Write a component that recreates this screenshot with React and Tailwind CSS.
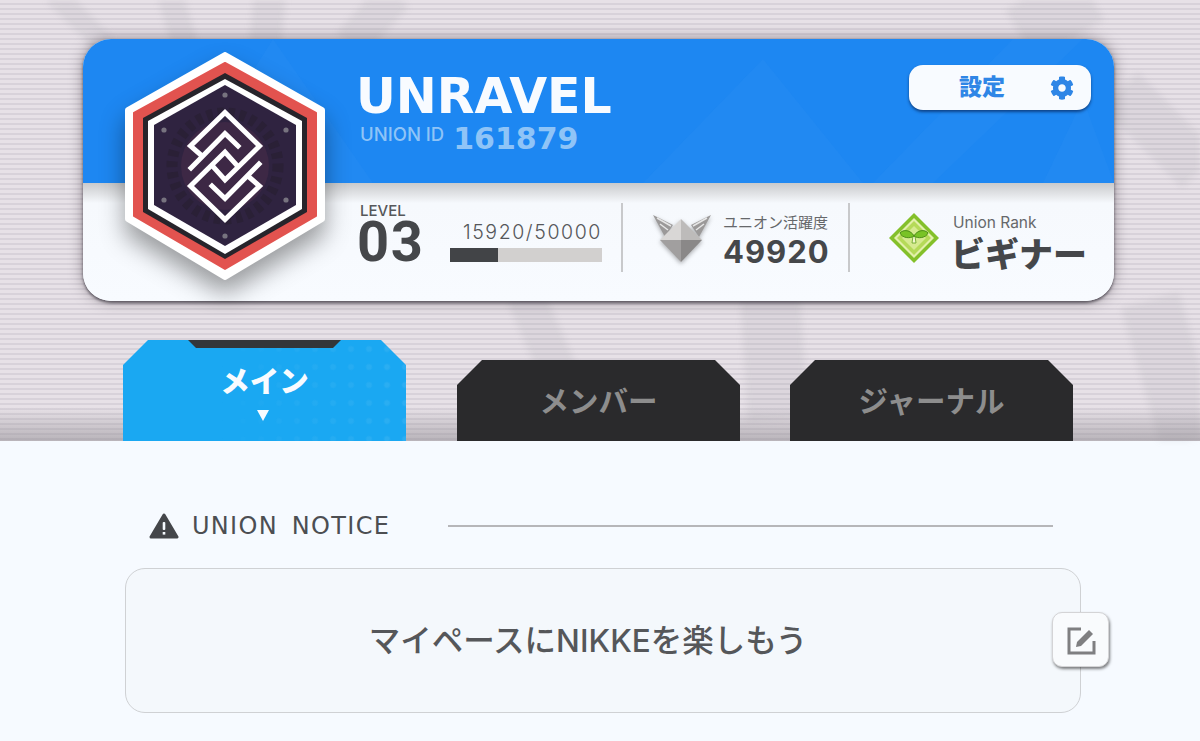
import { FaCog } from "react-icons/fa";

const jp = "font-['Inter','Noto_Sans_CJK_JP',sans-serif]";

function Badge() {
  const arm = (
    <>
      <polyline points="76,103 65.5,94 100,60.5 134.5,94 100,128 87.5,114" />
      <polyline points="66,116 100,81.5 113,94" />
    </>
  );
  return (
    <svg viewBox="0 0 200 228" className="absolute left-[42px] top-[13px] h-[228px] w-[200px] drop-shadow-[0_14px_12px_rgba(0,0,0,0.38)]">
      <polygon points="100,3 197,58 197,167 100,225 3,167 3,58" fill="#fff" stroke="#fff" strokeWidth="6" strokeLinejoin="round" />
      <polygon points="100,11 191,61 191,164 100,217 9,164 9,61" fill="#e2534f" stroke="#e2534f" strokeWidth="2" strokeLinejoin="round" />
      <polygon points="100,21 182,66 182,160 100,207 18,160 18,66" fill="#27242b" />
      <polygon points="100,27 177,69 177,157 100,202 23,157 23,69" fill="#fff" />
      <polygon points="100,33 171,73 171,153 100,194 29,153 29,73" fill="#2f2340" />
      <circle cx="100" cy="114" r="53" fill="none" stroke="#2a2036" strokeWidth="11" strokeDasharray="6 5" />
      <circle cx="100" cy="114" r="44" fill="#3d2845" />
      <g fill="#77737f">
        <circle cx="100" cy="43" r="2.6" />
        <circle cx="161" cy="78" r="2.6" />
        <circle cx="161" cy="148" r="2.6" />
        <circle cx="100" cy="184" r="2.6" />
        <circle cx="39" cy="148" r="2.6" />
        <circle cx="39" cy="78" r="2.6" />
      </g>
      <g fill="none" stroke="#fff" strokeWidth="5" strokeLinecap="square" strokeLinejoin="miter">
        {arm}
        <g transform="rotate(180 100 114)">{arm}</g>
      </g>
    </svg>
  );
}

function SilverMark() {
  return (
    <svg viewBox="0 0 58 50" className="h-[50px] w-[58px] drop-shadow-[0_2px_2px_rgba(0,0,0,0.3)]">
      <path d="M0 2 L20 12 L12 24 Z" fill="#9b9999" />
      <path d="M58 2 L38 12 L46 24 Z" fill="#9b9999" />
      <path d="M4 5 L18 13 M7 11 L15 17 M54 5 L40 13 M51 11 L43 17" stroke="#e6e6e6" strokeWidth="1.5" />
      <path d="M28 6 L7 27 L28 27 Z" fill="#d9d7d6" />
      <path d="M28 6 L49 27 L28 27 Z" fill="#bdbbba" />
      <path d="M7 27 L28 49 L28 27 Z" fill="#a19f9f" />
      <path d="M49 27 L28 49 L28 27 Z" fill="#8a8888" />
    </svg>
  );
}

function SproutMark() {
  return (
    <svg viewBox="0 0 52 52" className="h-[52px] w-[52px]">
      <polygon points="26,1 51,26 26,51 1,26" fill="#84c02a" />
      <polygon points="26,6 46,26 26,46 6,26" fill="#e3f0ab" />
      <polygon points="26,9 43,26 26,43 9,26" fill="#b5da58" />
      <polygon points="26,14 38,26 26,38 14,26" fill="#d6ea90" />
      <path d="M24 31 H28 L27 24 H25 Z" fill="#f3f8d0" stroke="#5f9f1c" strokeWidth="0.8" />
      <path d="M26 24 C23 18 15 17 12 21 C14 26 22 27 26 24 Z" fill="#79c326" stroke="#4f8f1a" strokeWidth="1" />
      <path d="M26 24 C29 18 37 17 40 21 C38 26 30 27 26 24 Z" fill="#79c326" stroke="#4f8f1a" strokeWidth="1" />
    </svg>
  );
}

function Backdrop() {
  return (
    <svg viewBox="0 0 1200 441" className="absolute inset-0 h-[441px] w-[1200px] blur-[3px]">
      <g fill="none" stroke="#8f8a92" strokeOpacity="0.12">
        <path d="M55 -5 L105 45" strokeWidth="22" />
        <path d="M170 -5 L185 45" strokeWidth="26" />
        <path d="M270 -5 L265 45" strokeWidth="32" />
        <path d="M395 -5 L350 45" strokeWidth="36" />
        <path d="M525 295 L575 410" strokeWidth="38" />
        <path d="M770 295 L778 420" strokeWidth="60" />
        <path d="M1040 -10 L1070 40" strokeWidth="80" />
        <path d="M1120 90 L1200 170" strokeWidth="50" />
        <path d="M1150 300 L1190 440" strokeWidth="60" />
      </g>
    </svg>
  );
}

function Tab({ label, className = "" }) {
  return (
    <div className={`flex h-[81px] w-[283px] items-center justify-center bg-[#2a2a2c] pt-[1px] text-[29.5px] font-bold text-[#8d8d8d] [clip-path:polygon(25px_0,258px_0,283px_25px,283px_100%,0_100%,0_25px)] ${jp} ${className}`}>
      {label}
    </div>
  );
}

export default function App() {
  return (
    <div className={`h-[741px] w-[1200px] overflow-hidden bg-[#f6faff] ${jp}`}>
      {/* Top */}
      <section className="relative h-[441px] bg-[repeating-linear-gradient(180deg,#e7e1e7_0px,#e7e1e7_3px,#d8d2da_3px,#d8d2da_5px)] pt-[39px]">
        <Backdrop />
        <div className="absolute inset-x-0 bottom-0 h-[34px] bg-gradient-to-b from-transparent to-[#8a868c]/50" />

        {/* Union card */}
        <div className="relative mx-[83px] h-[262px] w-[1031px] rounded-[28px] bg-[#f8fbff] shadow-[0_2px_3px_rgba(50,45,55,0.7),0_0_14px_rgba(60,50,60,0.5)]">
          <div className="relative flex h-[144px] justify-between overflow-hidden rounded-t-[28px] bg-[#1d87f2] pl-[275px] pr-[23px]">
            <svg viewBox="0 0 1031 144" className="absolute inset-0 h-[144px] w-[1031px]">
              <g fill="#3b98f5" fillOpacity="0.16">
                <polygon points="100,144 190,0 290,144" />
                <polygon points="560,144 680,20 780,144" />
                <polygon points="790,144 930,0 1000,0 850,144" />
                <polygon points="960,144 1000,60 1031,144" />
              </g>
            </svg>
            <div className="relative pt-[30px]">
              <div className="-ml-[2px] font-['DejaVu_Sans',sans-serif] text-[49px] font-bold leading-[56px] text-[#f8fbff]">UNRAVEL</div>
              <div className="-mt-[1px] flex items-center gap-[9px] pl-[2px] leading-none text-[#8fc4f7]">
                <span className="-mt-[9px] text-[18.5px] font-medium">UNION ID</span>
                <span className="font-['DejaVu_Sans',sans-serif] text-[30px] font-bold">161879</span>
              </div>
            </div>
            <div className="relative mt-[26px] flex h-[45px] w-[182px] items-center justify-between rounded-[14px] bg-[#f8fbff] pl-[50px] pr-[17px] text-[#2f86e6] shadow-[0_2px_3px_rgba(10,50,110,0.8)]">
              <span className="text-[23px] font-black">設定</span>
              <FaCog className="text-[24px]" />
            </div>
          </div>

          <div className="flex h-[118px] rounded-b-[28px] bg-gradient-to-b from-[#c9cacc] from-0% via-[#f6f9fd] via-[17%] to-[#f8fbff] pl-[275px] pt-[20px] text-[#45474a]">
            <div className="flex h-[69px] w-[265px] border-r-2 border-[#c8c9cb]">
              <div className="w-[92px] pl-[2px]">
                <div className="text-[15px] font-medium leading-[15px] text-[#55575a]">LEVEL</div>
                <div className="-ml-[3px] font-['Roboto',sans-serif] text-[56px] font-bold leading-[49px] tracking-[1.5px]">03</div>
              </div>
              <div className="w-[152px] pt-[18px]">
                <div className="text-right text-[19.5px] font-light leading-[22px] tracking-[1.6px] text-[#55575a]">15920/50000</div>
                <div className="mt-[5px] h-[14px] w-[152px] bg-[#d2d0cf]">
                  <div className="h-full w-[48px] bg-[#424447]" />
                </div>
              </div>
            </div>
            <div className="flex h-[69px] w-[227px] border-r-2 border-[#c8c9cb] pl-[30px]">
              <div className="pt-[10px]">
                <SilverMark />
              </div>
              <div className="ml-[12px] pt-[10px]">
                <div className="text-[15px] leading-[20px] text-[#66686b]">ユニオン活躍度</div>
                <div className="text-[31px] font-bold leading-[38px] tracking-[1px]">49920</div>
              </div>
            </div>
            <div className="flex h-[69px] pl-[38px]">
              <div className="pt-[9px]">
                <SproutMark />
              </div>
              <div className="ml-[13px] pt-[10px]">
                <div className="text-[15.5px] leading-[20px] text-[#66686b]">Union Rank</div>
                <div className="-ml-[2px] text-[34px] font-black leading-[44px]">ビギナー</div>
              </div>
            </div>
          </div>

          <Badge />
        </div>

        {/* Tabs */}
        <div className="relative mt-[39px] flex items-end gap-[51px] pl-[123px]">
          <div className="relative flex h-[101px] w-[283px] flex-col items-center bg-[#1aa8f2] pt-[21px] [clip-path:polygon(25px_0,258px_0,283px_25px,283px_100%,0_100%,0_25px)]">
            <div className="absolute inset-y-0 right-0 w-[190px] bg-[radial-gradient(circle,#ffffff14_2px,transparent_4px)] bg-[length:18px_18px] [mask-image:linear-gradient(to_right,transparent,black)]" />
            <div className="absolute left-[65px] top-0 h-[8px] w-[153px] bg-[#33363a] [clip-path:polygon(0_0,100%_0,calc(100%-8px)_100%,8px_100%)]" />
            <div className="relative text-[29.5px] font-black leading-[40px] text-[#f8fbff]">メイン</div>
            <div className="relative -ml-[3px] mt-[9px] h-0 w-0 border-x-[6px] border-t-[11px] border-x-transparent border-t-[#f8fbff]" />
          </div>
          <Tab label="メンバー" />
          <Tab label="ジャーナル" className="-ml-[1px]" />
        </div>
      </section>

      {/* Notice */}
      <section className="bg-[#f6faff] pl-[125px] pr-[119px] pt-[71px]">
        <div className="flex items-center pl-[24px] pr-[28px]">
          <svg viewBox="0 0 30 26" className="h-[26px] w-[30px]">
            <path d="M15 2 L28 24 H2 Z" fill="#44464a" stroke="#44464a" strokeWidth="3" strokeLinejoin="round" />
            <rect x="13.7" y="9" width="2.6" height="8" rx="1" fill="#f6faff" />
            <rect x="13.7" y="19" width="2.6" height="2.6" fill="#f6faff" />
          </svg>
          <span className="ml-[13px] font-['DejaVu_Sans',sans-serif] text-[24px] leading-[28px] tracking-[1.3px] text-[#4c4e52] [word-spacing:5px]">UNION NOTICE</span>
          <div className="ml-[58px] h-[2px] flex-1 bg-[#b6b6b9]" />
        </div>

        <div className="relative mt-[28px] flex h-[145px] items-center justify-center rounded-[20px] border border-[#cfd1d4] bg-[#f4f8fc] pr-[30px] text-[31.5px] font-medium text-[#55575a]">
          マイペースにNIKKEを楽しもう
          <div className="absolute -right-[29px] top-[43px] flex h-[55px] w-[57px] items-center justify-center rounded-[10px] border border-[#d4d4d6] bg-[#f9fbfd] shadow-[1px_2px_3px_rgba(0,0,0,0.5)]">
            <svg viewBox="0 0 30 30" className="h-[30px] w-[30px]" fill="none">
              <path d="M15 4 H3 V28 H28 V16" stroke="#7f7f81" strokeWidth="3" />
              <path d="M10 22 L11 17 L23 5 L27 9 L15 21 Z" fill="#7f7f81" />
            </svg>
          </div>
        </div>
      </section>
    </div>
  );
}
